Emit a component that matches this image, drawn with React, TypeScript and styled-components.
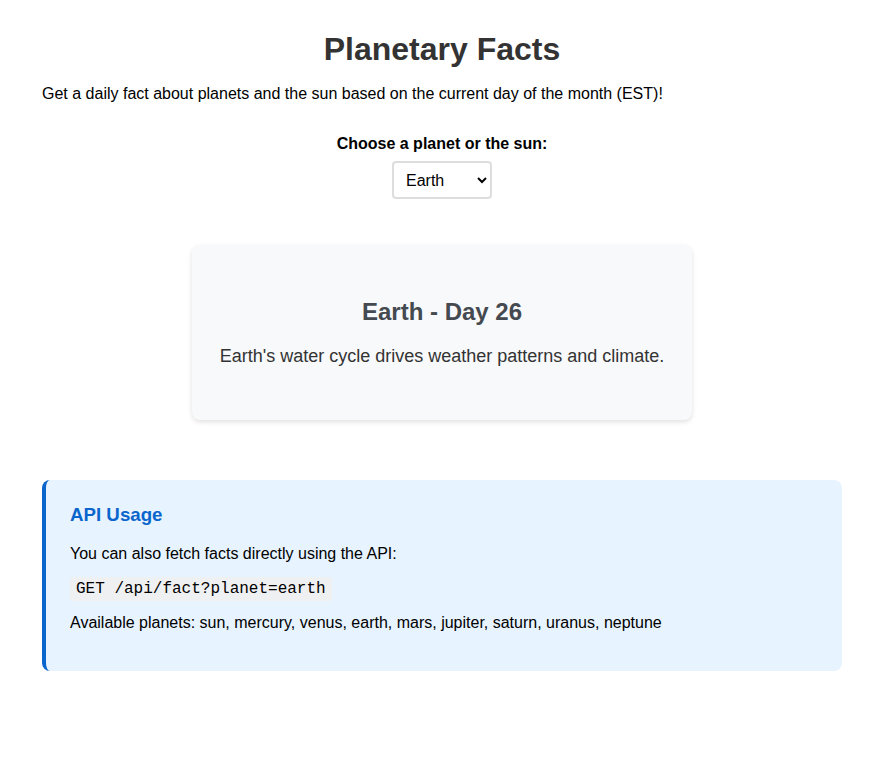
import React, { useState } from "react";
import styled, { createGlobalStyle } from "styled-components";

const GlobalStyle = createGlobalStyle`
  body {
    margin: 0;
    background: #ffffff;
    font-family: "Liberation Sans", Arial, sans-serif;
    color: #000;
  }
`;

const Page = styled.div`
  display: flex;
  justify-content: center;
  padding: 31px 0 40px 3px;
`;

const Container = styled.main`
  width: 800px;
`;

const Title = styled.h1`
  margin: 0;
  font-size: 32px;
  font-weight: bold;
  color: #333;
  text-align: center;
`;

const Intro = styled.p`
  margin: 17px 0 0;
  font-size: 16px;
`;

const Picker = styled.div`
  margin-top: 31.6px;
  display: flex;
  flex-direction: column;
  align-items: center;
`;

const Label = styled.label`
  font-size: 16px;
  font-weight: bold;
  margin-bottom: 8px;
`;

const Select = styled.select`
  width: 100px;
  height: 38px;
  padding: 8px;
  font-size: 16px;
  font-family: "Liberation Sans", Arial, sans-serif;
  border: 2px solid #dddddd;
  border-radius: 4px;
  background: #fff;
  color: #000;
`;

const FactCard = styled.section`
  box-sizing: border-box;
  width: 500px;
  height: 175px;
  margin: 46px auto 0;
  padding: 53px 10px 0;
  background: #f8f9fa;
  border-radius: 8px;
  box-shadow: 0 2px 5px rgba(0, 0, 0, 0.12);
  text-align: center;
`;

const FactTitle = styled.h2`
  margin: 0 0 20px;
  font-size: 24px;
  font-weight: bold;
  color: #444a50;
`;

const FactText = styled.p`
  margin: 0;
  font-size: 18px;
  color: #333;
`;

const ApiBox = styled.section`
  margin-top: 60px;
  padding: 24px 24px 23px;
  background: #e7f3fe;
  border-left: 4px solid #0a66cc;
  border-radius: 8px;
`;

const ApiTitle = styled.h3`
  margin: 0 0 19.72px;
  font-size: 18.72px;
  font-weight: bold;
  color: #0a66cc;
`;

const ApiText = styled.p`
  margin: 0 0 16px;
  font-size: 16px;
`;

const Code = styled.code`
  font-family: "Liberation Mono", "Courier New", monospace;
  font-size: 16px;
  background: #eff0f2;
  padding: 3px 6px;
  border-radius: 3px;
`;

const planets = [
  "Sun",
  "Mercury",
  "Venus",
  "Earth",
  "Mars",
  "Jupiter",
  "Saturn",
  "Uranus",
  "Neptune",
];

export default function App() {
  const [planet, setPlanet] = useState("earth");

  return (
    <>
      <GlobalStyle />
      <Page>
        <Container>
          <Title>Planetary Facts</Title>
          <Intro>
            Get a daily fact about planets and the sun based on the current day
            of the month (EST)!
          </Intro>

          <Picker>
            <Label htmlFor="planet">Choose a planet or the sun:</Label>
            <Select
              id="planet"
              value={planet}
              onChange={(e) => setPlanet(e.target.value)}
            >
              {planets.map((p) => (
                <option key={p} value={p.toLowerCase()}>
                  {p}
                </option>
              ))}
            </Select>
          </Picker>

          <FactCard>
            <FactTitle>Earth - Day 26</FactTitle>
            <FactText>
              Earth's water cycle drives weather patterns and climate.
            </FactText>
          </FactCard>

          <ApiBox>
            <ApiTitle>API Usage</ApiTitle>
            <ApiText>You can also fetch facts directly using the API:</ApiText>
            <ApiText>
              <Code>GET /api/fact?planet=earth</Code>
            </ApiText>
            <ApiText>
              Available planets: sun, mercury, venus, earth, mars, jupiter,
              saturn, uranus, neptune
            </ApiText>
          </ApiBox>
        </Container>
      </Page>
    </>
  );
}
